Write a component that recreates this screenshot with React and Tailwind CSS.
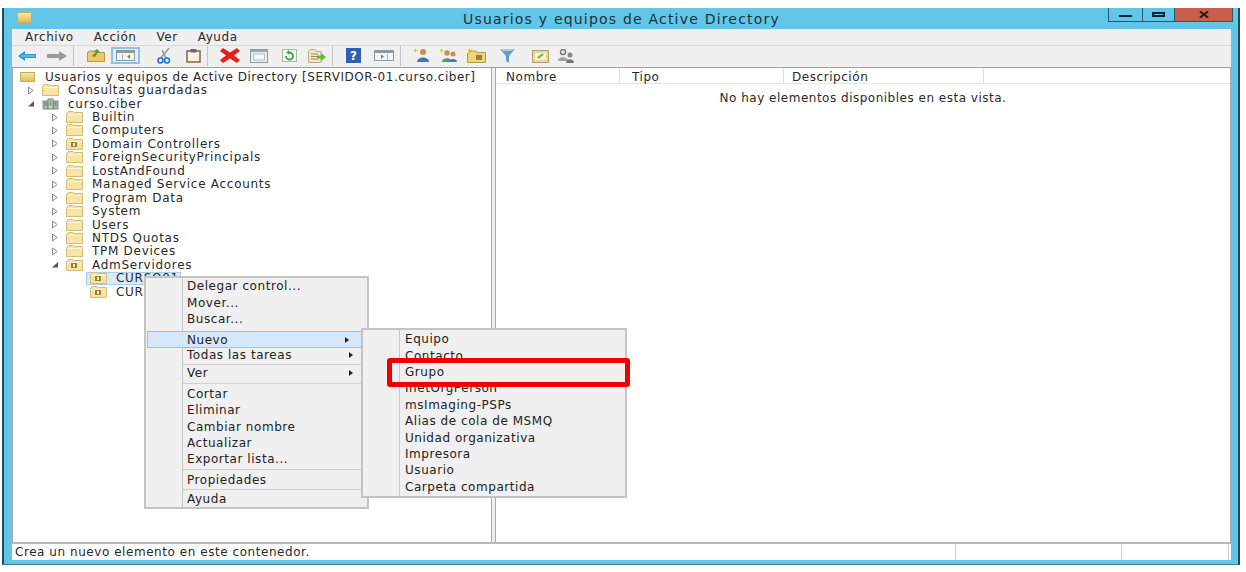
import React from "react";

const treeItems = [
  { label: "Consultas guardadas", depth: 0, arrow: "closed", icon: "folder" },
  { label: "curso.ciber", depth: 0, arrow: "open", icon: "domain" },
  { label: "Builtin", depth: 1, arrow: "closed", icon: "folder" },
  { label: "Computers", depth: 1, arrow: "closed", icon: "folder" },
  { label: "Domain Controllers", depth: 1, arrow: "closed", icon: "ou" },
  { label: "ForeignSecurityPrincipals", depth: 1, arrow: "closed", icon: "folder" },
  { label: "LostAndFound", depth: 1, arrow: "closed", icon: "folder" },
  { label: "Managed Service Accounts", depth: 1, arrow: "closed", icon: "folder" },
  { label: "Program Data", depth: 1, arrow: "closed", icon: "folder" },
  { label: "System", depth: 1, arrow: "closed", icon: "folder" },
  { label: "Users", depth: 1, arrow: "closed", icon: "folder" },
  { label: "NTDS Quotas", depth: 1, arrow: "closed", icon: "folder" },
  { label: "TPM Devices", depth: 1, arrow: "closed", icon: "folder" },
  { label: "AdmServidores", depth: 1, arrow: "open", icon: "ou" },
  { label: "CURSO01", depth: 2, icon: "ou", selected: true },
  { label: "CURSO02", depth: 2, icon: "ou" },
];

const FolderIcon = ({ ou }) => (
  <svg width="17" height="12" viewBox="0 0 17 12" className="shrink-0">
    <path d="M.5 2.5V11.5H16.5V1.5H8L7 .5H2L1 2.5Z" fill="#f7e3a6" stroke="#d4bb78" />
    <path d="M1.5 3.5H15.5" stroke="#fff6d8" />
    {ou && <rect x="5" y="4" width="6" height="5" fill="#9a8040" />}
    {ou && <rect x="7" y="5" width="2" height="3" fill="#f5e8b0" />}
  </svg>
);

const DomainIcon = () => (
  <svg width="17" height="12" viewBox="0 0 17 12" className="shrink-0">
    <rect x="1" y="3" width="5" height="8" fill="#a9b8b4" stroke="#7c8c88" />
    <rect x="11" y="3" width="5" height="8" fill="#a9b8b4" stroke="#7c8c88" />
    <rect x="6" y="1" width="5" height="10" fill="#c5d3c4" stroke="#6e8a78" />
    <path d="M7.5 3H9.5M7.5 5H9.5M7.5 7H9.5M2.5 5H4.5M2.5 7H4.5M12.5 5H14.5M12.5 7H14.5" stroke="#4f6a60" />
  </svg>
);

const TreeArrow = ({ type }) => {
  if (type === "closed") {
    return (
      <svg width="8" height="9" viewBox="0 0 8 9" className="shrink-0">
        <path d="M1.5 1V8L6 4.5Z" fill="#fff" stroke="#8a8a8a" />
      </svg>
    );
  }
  if (type === "open") {
    return (
      <svg width="8" height="9" viewBox="0 0 8 9" className="shrink-0">
        <path d="M1 7.5H7V2Z" fill="#555" />
      </svg>
    );
  }
  return <span className="w-2 shrink-0" />;
};

const TreeRow = ({ item }) => (
  <div className="flex h-[13.45px] items-center">
    <span className={item.depth === 0 ? "w-[14px] shrink-0" : item.depth === 1 ? "w-[38px] shrink-0" : "w-[62px] shrink-0"} />
    <TreeArrow type={item.arrow} />
    <div className={`ml-[3px] flex h-[13px] items-center pl-[3px] pr-[1px] ${item.selected ? "border border-[#a9cdea] bg-[#d9ebfa]" : "border border-transparent"}`}>
      {item.icon === "domain" ? <DomainIcon /> : <FolderIcon ou={item.icon === "ou"} />}
      <span className="ml-[9px] whitespace-nowrap tracking-[0.72px]">{item.label}</span>
    </div>
  </div>
);

const Sep = () => <span className="mx-[6px] h-[20px] w-px shrink-0 bg-[#c4c4c4]" />;

const Sparkle = () => <path d="M2.5 0L3.3 1.7L5 2.5L3.3 3.3L2.5 5L1.7 3.3L0 2.5L1.7 1.7Z" fill="#f2c230" />;

const Toolbar = () => (
  <div className="flex h-[22px] shrink-0 items-center border-b border-[#a0a0a0] bg-[#f0f0f0] pb-[2px] pl-[6px]">
    {/* back */}
    <svg width="18" height="10" viewBox="0 0 18 10" className="shrink-0">
      <path d="M0 5L7 0V3H18V7H7V10Z" fill="#2f9bdc" />
      <path d="M3 5H17" stroke="#8fd0f2" />
    </svg>
    {/* forward */}
    <svg width="20" height="10" viewBox="0 0 20 10" className="ml-[11px] shrink-0">
      <path d="M20 5L12 0V3H0V7H12V10Z" fill="#9a9a9a" />
    </svg>
    <Sep />
    <svg width="18" height="13" viewBox="0 0 18 13" className="ml-[7px] shrink-0">
      <path d="M.5 3.5V12.5H17.5V3.5H9L8 2H2Z" fill="#ecc964" stroke="#b59a45" />
      <path d="M5 7L9 3H6.5L10 0L13 3H11L8 8Z" fill="#4f9c3a" />
    </svg>
    <div className="ml-[6px] flex h-[17px] w-[29px] shrink-0 items-center justify-center border-2 border-[#8cc4e8] bg-[#e2f0fa]">
      <svg width="19" height="11" viewBox="0 0 19 11">
        <rect x=".5" y=".5" width="18" height="10" fill="#f4f4f4" stroke="#8a9aa0" />
        <rect x="1" y="1" width="17" height="2" fill="#8a9aa0" />
        <path d="M6.5 4V10" stroke="#a8b4b8" />
        <path d="M11 6.5L14 4.5V9Z" fill="#4f9c3a" />
      </svg>
    </div>
    <svg width="14" height="16" viewBox="0 0 14 16" className="ml-[17px] shrink-0">
      <path d="M4 10L12 0M9 10L5 2" stroke="#8a9aa8" strokeWidth="1.6" fill="none" />
      <circle cx="3.5" cy="12.5" r="2.5" fill="none" stroke="#2277cc" strokeWidth="1.6" />
      <circle cx="10" cy="12.5" r="2.5" fill="none" stroke="#2277cc" strokeWidth="1.6" />
    </svg>
    <svg width="15" height="14" viewBox="0 0 15 14" className="ml-[15px] shrink-0">
      <rect x="1" y="2" width="13" height="11" fill="#f7f2e4" stroke="#8a6f4a" strokeWidth="1.6" />
      <rect x="4.5" y="0" width="6" height="3.5" fill="#6a6a6a" />
    </svg>
    <Sep />
    <svg width="20" height="15" viewBox="0 0 20 15" className="ml-[6px] shrink-0">
      <path d="M3 0L10 4.5L17 0L20 3L14 7.5L20 12L17 15L10 10.5L3 15L0 12L6 7.5L0 3Z" fill="#e4201c" />
    </svg>
    <svg width="18" height="14" viewBox="0 0 18 14" className="ml-[10px] shrink-0">
      <rect x=".5" y=".5" width="17" height="13" fill="#e8eef2" stroke="#8f9ba3" />
      <rect x="1" y="1" width="16" height="2" fill="#9faab0" />
      <rect x="3.5" y="5" width="11" height="6" fill="#f4f8fa" stroke="#b4c0c8" />
    </svg>
    <svg width="15" height="13" viewBox="0 0 15 13" className="ml-[14px] shrink-0">
      <rect x=".5" y=".5" width="14" height="12" fill="#f1f4f0" stroke="#a9b5a9" />
      <path d="M4 7A3.5 3.5 0 1 0 7.5 3.5H6" stroke="#3aa04a" strokeWidth="1.8" fill="none" />
      <path d="M7 1L4.5 3.5L7 6Z" fill="#3aa04a" />
    </svg>
    <svg width="18" height="14" viewBox="0 0 18 14" className="ml-[11px] shrink-0">
      <path d="M.5 2.5V13.5H13V2.5H8L7 .5H2Z" fill="#f2e7bd" stroke="#b9ad82" />
      <path d="M3 5H10M3 7.5H10M3 10H10" stroke="#8f8a70" />
      <path d="M9 6.5H13V4L18 8L13 12V9.5H9Z" fill="#5dbb3a" />
    </svg>
    <Sep />
    <div className="ml-[7px] flex h-[15px] w-[15px] shrink-0 items-center justify-center bg-[#2f5fb4] text-[12px] font-bold text-white">?</div>
    <svg width="20" height="11" viewBox="0 0 20 11" className="ml-[13px] shrink-0">
      <rect x=".5" y=".5" width="19" height="10" fill="#f4f4f4" stroke="#8a9aa0" />
      <rect x="1" y="1" width="18" height="2" fill="#8a9aa0" />
      <path d="M13.5 4V10" stroke="#a8b4b8" />
      <path d="M10 6.5L7 4.5V9Z" fill="#4f9c3a" />
    </svg>
    <Sep />
    <svg width="19" height="15" viewBox="0 0 19 15" className="ml-[6px] shrink-0">
      <Sparkle />
      <circle cx="10" cy="4" r="3" fill="#c98f4a" />
      <path d="M4 14C4 8 16 8 16 14Z" fill="#2f7fb8" />
    </svg>
    <svg width="19" height="15" viewBox="0 0 19 15" className="ml-[7px] shrink-0">
      <Sparkle />
      <circle cx="8" cy="5" r="2.7" fill="#c98f4a" />
      <path d="M3 14C3 9 13 9 13 14Z" fill="#4f9c6a" />
      <circle cx="14" cy="6" r="2.5" fill="#c98f4a" />
      <path d="M10 14C10 10 18 10 18 14Z" fill="#2f7fb8" />
    </svg>
    <svg width="19" height="15" viewBox="0 0 19 15" className="ml-[9px] shrink-0">
      <Sparkle />
      <path d="M.5 5.5V14.5H18.5V4.5H10L9 3H4Z" fill="#f0d477" stroke="#b59a45" />
      <rect x="9" y="7" width="6" height="5" fill="#9a8040" />
    </svg>
    <svg width="15" height="14" viewBox="0 0 15 14" className="ml-[14px] shrink-0">
      <path d="M0 0H15L9 7V14L6 12V7Z" fill="#5b9fc9" />
      <path d="M1 0H14L12 2H3Z" fill="#a9cfe6" />
    </svg>
    <svg width="17" height="14" viewBox="0 0 17 14" className="ml-[17px] shrink-0">
      <rect x=".5" y="1.5" width="16" height="12" fill="#ecd98f" stroke="#a9a070" />
      <rect x="3" y="4" width="11" height="7" fill="#f8f4dc" />
      <path d="M6 9L11 5" stroke="#5dbb3a" strokeWidth="2" />
    </svg>
    <svg width="18" height="14" viewBox="0 0 18 14" className="ml-[8px] shrink-0">
      <circle cx="6" cy="3" r="2.5" fill="none" stroke="#777" strokeWidth="1.4" />
      <path d="M1 12C1 7 11 7 11 12Z" fill="#a2a2a2" />
      <circle cx="13" cy="6" r="2.5" fill="#8a8a8a" />
      <path d="M9 14C9 9 17 9 17 14Z" fill="#777" />
    </svg>
  </div>
);

const SubArrow = () => <span className="h-0 w-0 border-y-[3px] border-l-[4px] border-y-transparent border-l-[#222]" />;

const MenuRow = ({ label, hasSub }) => (
  <div className="flex h-[16.4px] items-center justify-between pr-[14px]">
    <span className="whitespace-nowrap tracking-[0.55px]">{label}</span>
    {hasSub && <SubArrow />}
  </div>
);

const ContextMenu = () => (
  <div className="absolute left-[144px] top-[276px] h-[233px] w-[225px] border-2 border-[#c4c4c4] bg-[#f0f0f0] pl-[41px] text-[#222]">
    <div className="absolute bottom-0 left-[36px] top-0 w-px bg-[#c8c8c8]" />
    <MenuRow label="Delegar control..." />
    <MenuRow label="Mover..." />
    <MenuRow label="Buscar..." />
    <div className="h-[20px]" />
    <MenuRow label="Todas las tareas" hasSub />
    <div className="-ml-[5px] h-px bg-[#d0d0d0]" />
    <MenuRow label="Ver" hasSub />
    <div className="-ml-[5px] my-[1.8px] h-px bg-[#d0d0d0]" />
    <MenuRow label="Cortar" />
    <MenuRow label="Eliminar" />
    <MenuRow label="Cambiar nombre" />
    <MenuRow label="Actualizar" />
    <MenuRow label="Exportar lista..." />
    <div className="-ml-[5px] my-[1.5px] h-px bg-[#d0d0d0]" />
    <MenuRow label="Propiedades" />
    <div className="-ml-[5px] my-[1px] h-px bg-[#d0d0d0]" />
    <MenuRow label="Ayuda" />
    <div className="absolute left-[1px] top-[53px] flex h-[17px] w-[217px] items-center justify-between border border-[#8fc3ea] bg-[#d6e8f8] pl-[39px] pr-[14px]">
      <span className="tracking-[0.55px]">Nuevo</span>
      <SubArrow />
    </div>
  </div>
);

const SubMenu = () => (
  <div className="absolute left-[361px] top-[328px] h-[170px] w-[266px] border-2 border-[#c4c4c4] bg-[#f0f0f0] pl-[42px] pt-[1px] text-[#222]">
    <div className="absolute bottom-0 left-[36px] top-0 w-px bg-[#c8c8c8]" />
    {["Equipo", "Contacto", "Grupo", "InetOrgPerson", "msImaging-PSPs", "Alias de cola de MSMQ", "Unidad organizativa", "Impresora", "Usuario", "Carpeta compartida"].map((label) => (
      <MenuRow key={label} label={label} />
    ))}
  </div>
);

export default function App() {
  return (
    <div className="relative h-[572px] w-[1246px] overflow-hidden bg-white pb-[7px] pl-[2px] pr-[6px] pt-[8px] text-[12px] leading-none text-[#2a2a2a] [font-family:'DejaVu_Sans',sans-serif]">
      <div className="flex h-full flex-col border-x-2 border-b border-x-[#23495c] border-b-[#3f7f96] bg-[#62c6e8] pb-[4px] pl-[8px] pr-[7px]">
        {/* title bar */}
        <div className="relative flex h-[21px] shrink-0 items-center justify-center">
          <span className="absolute left-[5px] top-[4px] h-[11px] w-[15px] border border-[#c9ad4f] bg-gradient-to-b from-[#f7e6a4] to-[#e0be5c]" />
          <span className="text-[14px] tracking-[1.2px] text-[#17313d]">Usuarios y equipos de Active Directory</span>
          <div className="absolute -right-[2px] top-0 flex h-[14px] border border-t-0 border-[#2f5566]">
            <div className="flex w-[34px] items-center justify-center border-r border-[#2f5566] pt-[3px]">
              <span className="h-[2px] w-[13px] bg-[#10202a]" />
            </div>
            <div className="flex w-[32px] items-center justify-center border-r border-[#2f5566]">
              <span className="h-[5px] w-[13px] border-2 border-[#10202a]" />
            </div>
            <div className="flex w-[57px] items-center justify-center bg-[#c75d4d]">
              <svg width="10" height="7" viewBox="0 0 10 7">
                <path d="M1 .5L9 6.5M9 .5L1 6.5" stroke="#1c1c1c" strokeWidth="2" />
              </svg>
            </div>
          </div>
        </div>
        {/* menu bar */}
        <div className="flex h-[17px] shrink-0 items-center gap-[20px] border-b border-[#d8d8d8] bg-[#f0f0f0] pl-[13px] tracking-[0.55px]">
          <span>Archivo</span>
          <span>Acción</span>
          <span>Ver</span>
          <span>Ayuda</span>
        </div>
        <Toolbar />
        {/* panes */}
        <div className="flex min-h-0 flex-1 border-x border-[#a8a8a8] bg-white">
          <div className="w-[478px] shrink-0 pt-[2px]">
            <div className="flex h-[13.45px] items-center pl-[7px]">
              <span className="h-[10px] w-[15px] shrink-0 border border-[#c9ad4f] bg-gradient-to-b from-[#f7e6a4] to-[#e0be5c]" />
              <span className="ml-[10px] whitespace-nowrap tracking-[0.53px]">Usuarios y equipos de Active Directory [SERVIDOR-01.curso.ciber]</span>
            </div>
            {treeItems.map((item) => (
              <TreeRow key={item.label} item={item} />
            ))}
          </div>
          <div className="w-[5px] shrink-0 border-x border-[#a8a8a8] bg-[#f0f0f0]" />
          <div className="min-w-0 flex-1">
            <div className="flex h-[16px] items-center border-b border-[#e4e4e4]">
              <span className="h-full w-[124px] border-r border-[#e0e0e0] pl-[10px] pt-[3px] tracking-[0.55px]">Nombre</span>
              <span className="h-full w-[164px] border-r border-[#e0e0e0] pl-[12px] pt-[3px] tracking-[0.55px]">Tipo</span>
              <span className="h-full w-[200px] border-r border-[#e0e0e0] pl-[8px] pt-[3px] tracking-[0.55px]">Descripción</span>
            </div>
            <div className="pt-[8px] text-center tracking-[0.5px]">No hay elementos disponibles en esta vista.</div>
          </div>
        </div>
        {/* status bar */}
        <div className="flex h-[18px] shrink-0 items-center border-t-2 border-[#b9b9b9] bg-white">
          <span className="flex-1 pl-[3px] tracking-[0.55px]">Crea un nuevo elemento en este contenedor.</span>
          <span className="h-full w-[166px] border-l border-[#d0d0d0]" />
          <span className="h-full w-[108px] border-x border-[#d0d0d0]" />
          <span className="w-[2px]" />
        </div>
      </div>
      <ContextMenu />
      <SubMenu />
      <div className="absolute left-[387px] top-[358px] h-[29px] w-[243px] rounded-[3px] border-[5px] border-[#f00000]" />
    </div>
  );
}
